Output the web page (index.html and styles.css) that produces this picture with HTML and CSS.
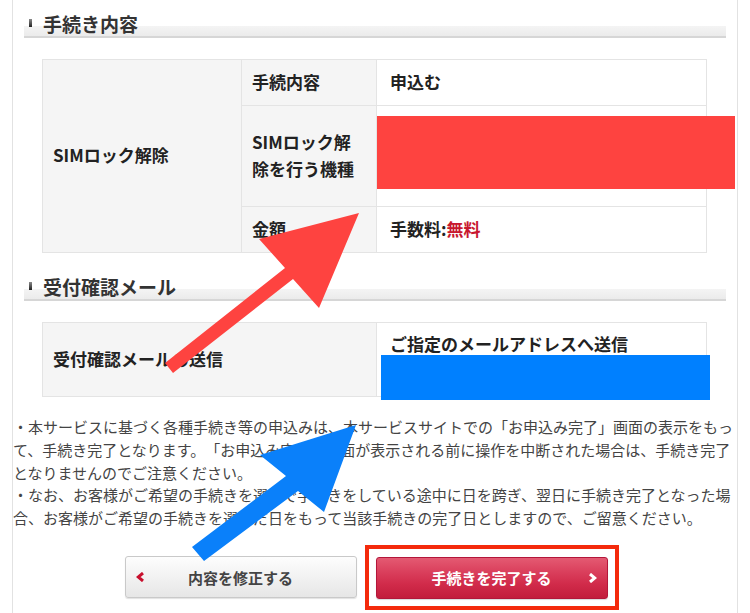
FILE: index.html
```html
<!DOCTYPE html>
<html lang="ja">
<head>
<meta charset="utf-8">
<title>手続き内容の確認</title>
<link rel="stylesheet" href="styles.css">
</head>
<body>
<div class="frame">
  <h2 class="sec-title">手続き内容</h2>
  <table class="info info-proc">
    <colgroup><col class="c1"><col class="c2"><col class="c3"></colgroup>
    <tr class="r-short">
      <th class="cat" rowspan="3">SIMロック解除</th>
      <th class="lbl">手続内容</th>
      <td class="val">申込む</td>
    </tr>
    <tr class="r-tall">
      <th class="lbl">SIMロック解<br>除を行う機種</th>
      <td class="val"></td>
    </tr>
    <tr class="r-short">
      <th class="lbl">金額</th>
      <td class="val">手数料:<span class="free">無料</span></td>
    </tr>
  </table>

  <h2 class="sec-title sec-mail">受付確認メール</h2>
  <table class="info info-mail">
    <colgroup><col class="m1"><col class="m2"></colgroup>
    <tr class="r-mail">
      <th class="cat">受付確認メールの送信</th>
      <td class="val top">ご指定のメールアドレスへ送信</td>
    </tr>
  </table>

  <div class="notes">
    <p>・本サービスに基づく各種手続き等の申込みは、本サービスサイトでの「お申込み完了」画面の表示をもって、手続き完了となります。「お申込み完了」画面が表示される前に操作を中断された場合は、手続き完了となりませんのでご注意ください。</p>
    <p>・なお、お客様がご希望の手続きを選んで手続きをしている途中に日を跨ぎ、翌日に手続き完了となった場合、お客様がご希望の手続きを選んだ日をもって当該手続きの完了日としますので、ご留意ください。</p>
  </div>

  <div class="actions">
    <button class="btn btn-back" type="button">
      <svg class="chev" width="9" height="10" viewBox="0 0 9 10"><polyline points="7,1 2.2,5 7,9" fill="none" stroke="#c8102e" stroke-width="3"/></svg>
      <span class="btn-text">内容を修正する</span>
      <span></span>
    </button>
    <div class="highlight">
      <button class="btn btn-done" type="button">
        <span></span>
        <span class="btn-text">手続きを完了する</span>
        <svg class="chev chev-r" width="9" height="10" viewBox="0 0 9 10"><polyline points="2,1 6.8,5 2,9" fill="none" stroke="#ffffff" stroke-width="3"/></svg>
      </button>
    </div>
  </div>
</div>

<svg class="marks" width="750" height="613" viewBox="0 0 750 613">
  <rect x="377" y="116" width="358" height="73" fill="#fe4340"/>
  <rect x="381" y="355" width="329" height="45" fill="#0080ff"/>
  <polygon points="359,213 319,308 293,279 173,373 165,363 285,268 259,239" fill="#fe4340"/>
  <polygon points="356,425 324,512 298,491 204,561 192,547 286,476 260,455" fill="#0a80fa"/>
</svg>
</body>
</html>
```

FILE: styles.css
```css
html, body {
  margin: 0;
  padding: 0;
  overflow: hidden;
  background: #ffffff;
}

body {
  font-family: "Noto Sans CJK JP", "Noto Sans", sans-serif;
  color: #222222;
}

.frame {
  margin: 0 12px;
  height: 613px;
  box-sizing: border-box;
  padding-top: 10px;
  border-left: 1px solid #e2e2e2;
  border-right: 1px solid #e2e2e2;
}

.sec-title {
  position: relative;
  margin: 0 11px;
  height: 26px;
  padding-left: 19px;
  font-size: 19px;
  line-height: 28px;
  font-weight: bold;
  color: #333333;
  border-bottom: 2px solid #d6d6d6;
  background: linear-gradient(to bottom, rgba(255,255,255,0) 16px, #f4f4f4 16px, #ebebeb 100%);
}

.sec-title::before {
  content: "";
  position: absolute;
  left: 5px;
  top: 9px;
  width: 3px;
  height: 8px;
  background: linear-gradient(#8a8a8a, #222222);
}

.sec-mail {
  margin-top: 20px;
}

.info {
  border-collapse: collapse;
  table-layout: fixed;
  width: 664px;
  margin: 21px 0 0 29px;
}

.info .c1 { width: 199px; }
.info .c2 { width: 135px; }
.info .c3 { width: 330px; }
.info .m1 { width: 334px; }
.info .m2 { width: 330px; }

.info th,
.info td {
  border: 1px solid #e4e4e4;
  font-size: 17px;
  font-weight: bold;
  line-height: 27px;
  text-align: left;
  padding: 0 10px 3px;
  color: #222222;
}

.info th {
  background: #f5f5f5;
}

.info td {
  background: #ffffff;
  padding-left: 13px;
}

.r-short { height: 46px; }
.r-tall { height: 101px; }
.r-mail { height: 74px; }

.info td.top {
  vertical-align: top;
  padding-top: 7px;
}

.free {
  color: #c8172f;
}

.notes {
  margin-top: 19px;
  font-size: 15px;
  line-height: 22.75px;
  color: #444444;
  text-spacing-trim: space-all;
}

.notes p {
  margin: 0;
}

.actions {
  display: flex;
  align-items: center;
  justify-content: center;
  gap: 8px;
  margin-top: 15px;
  padding-right: 7px;
}

.highlight {
  border: 4px solid #f42a0c;
  padding: 8px 7px 7px;
}

.btn {
  width: 232px;
  height: 42px;
  box-sizing: border-box;
  display: grid;
  grid-template-columns: 20px 1fr 20px;
  align-items: center;
  padding: 0 10px;
  margin: 0;
  border-radius: 3px;
  font-family: "Noto Sans CJK JP", "Noto Sans", sans-serif;
  font-size: 15px;
  font-weight: bold;
  cursor: pointer;
}

.btn-text {
  text-align: center;
}

.chev {
  display: block;
}

.chev-r {
  justify-self: end;
}

.btn-back {
  color: #444444;
  border: 1px solid #c9c9c9;
  background: linear-gradient(to bottom, #fdfdfd 0%, #f2f2f2 50%, #e6e6e6 100%);
  box-shadow: 0 1px 1px rgba(0,0,0,0.12);
}

.btn-done {
  color: #ffffff;
  border: 1px solid #b3163a;
  background: linear-gradient(to bottom, #e45a72 0%, #da3f5c 35%, #d12b4a 65%, #c21d3c 100%);
  box-shadow: 0 1px 1px rgba(0,0,0,0.15);
}

.marks {
  position: absolute;
  left: 0;
  top: 0;
  pointer-events: none;
}
```
